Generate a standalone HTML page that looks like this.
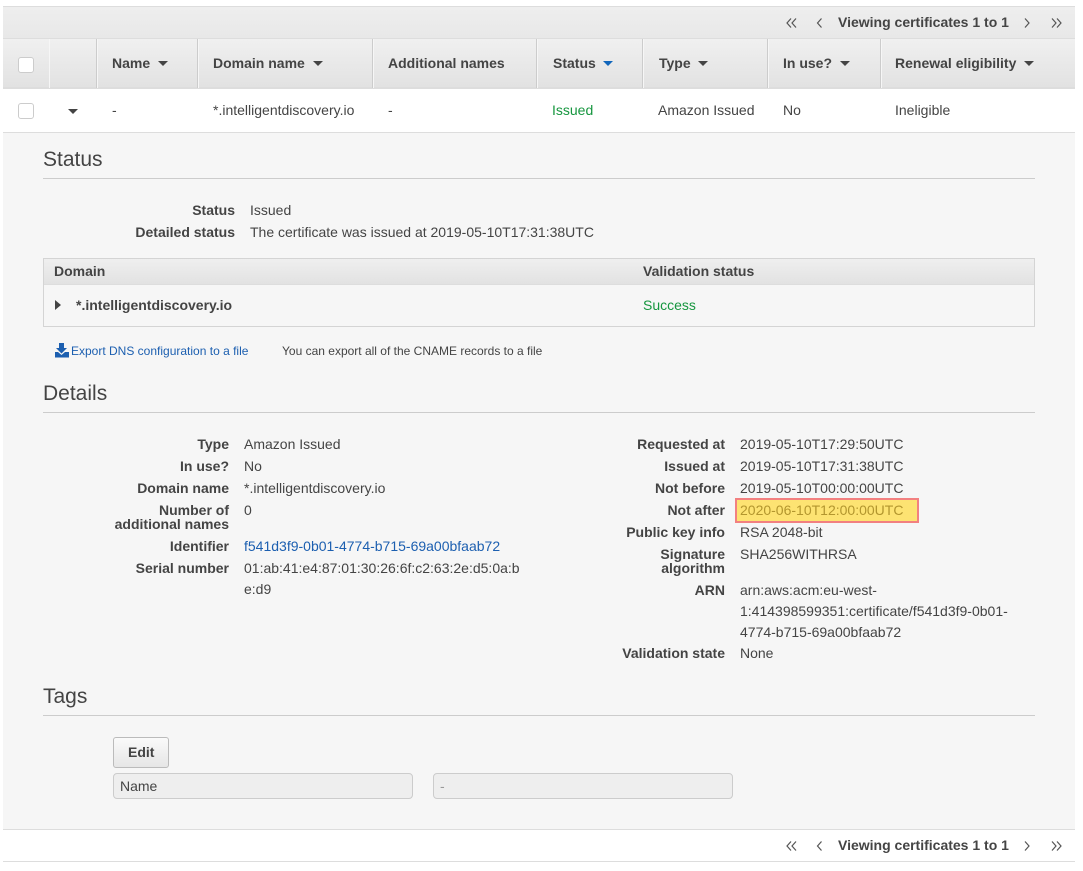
<!DOCTYPE html>
<html><head><meta charset="utf-8">
<style>
html,body{margin:0;padding:0;background:#fff;}
#p{position:relative;width:1083px;height:871px;overflow:hidden;background:#fff;font-family:"Liberation Sans",sans-serif;font-size:14px;color:#444;}
#p div,#p span.t,#p a{position:absolute;}
.t{line-height:20px;white-space:nowrap;}
.b{font-weight:bold;}
.r{text-align:right;}
.h{font-size:21px;line-height:24px;color:#444;white-space:nowrap;}
.hr{height:1px;background:#ccc;left:43px;width:992px;}
.bar{left:3px;width:1072px;background:linear-gradient(#eee,#e8e8e8);}
.sep{width:2px;top:39px;height:49px;background:#f6f6f6;border-left:1px solid #ccc;box-sizing:border-box;}
.cb{width:16px;height:16px;border:1px solid #ccc;border-radius:3px;background:#fff;left:18px;box-sizing:border-box;}
.tri{width:0;height:0;border-left:5px solid transparent;border-right:5px solid transparent;border-top:5px solid #444;}
.g{color:#16963f;}
.l{color:#1c5fb0;}
.inp{height:26px;background:#eee;border:1px solid #ccc;border-radius:4px;box-sizing:border-box;top:773px;}
svg{position:absolute;}
</style></head>
<body><div id="p">

<!-- top bar -->
<div class="bar" style="top:6px;height:32px;border-top:1px solid #ddd;box-sizing:border-box;"></div>
<svg style="left:780px;top:14px" width="290" height="18" fill="none" stroke="#555" stroke-width="1.2"><path d="M11 4.500L7 9l4 4.500M16 4.500L12 9l4 4.500"/><path d="M41.500 4.500L37.500 9l4 4.500"/><path d="M245 4.500L249 9l-4 4.500"/><path d="M272 4.500L276 9l-4 4.500M277 4.500L281 9l-4 4.500"/></svg>
<span class="t b" style="left:838px;top:12px;">Viewing certificates 1 to 1</span>

<!-- table header -->
<div class="bar" style="top:38px;height:51px;background:linear-gradient(#f0f0f0,#e2e2e2);border-top:1px solid #ddd;border-bottom:2px solid #ddd;box-sizing:border-box;"></div>
<div class="sep" style="left:49px;width:1px;border:0"></div>
<div class="sep" style="left:96px"></div>
<div class="sep" style="left:197px"></div>
<div class="sep" style="left:372px"></div>
<div class="sep" style="left:536px"></div>
<div class="sep" style="left:642px"></div>
<div class="sep" style="left:767px"></div>
<div class="sep" style="left:880px"></div>
<div class="cb" style="top:57px"></div>
<span class="t b" style="left:112px;top:53px;">Name</span><div class="tri" style="left:158px;top:61px"></div>
<span class="t b" style="left:213px;top:53px;">Domain name</span><div class="tri" style="left:313px;top:61px"></div>
<span class="t b" style="left:388px;top:53px;">Additional names</span>
<span class="t b" style="left:553px;top:53px;">Status</span><div class="tri" style="left:603px;top:61px;border-top-color:#1166bb"></div>
<span class="t b" style="left:659px;top:53px;">Type</span><div class="tri" style="left:698px;top:61px"></div>
<span class="t b" style="left:783px;top:53px;">In use?</span><div class="tri" style="left:840px;top:61px"></div>
<span class="t b" style="left:895px;top:53px;">Renewal eligibility</span><div class="tri" style="left:1024px;top:61px"></div>

<!-- row -->
<div class="cb" style="top:103px"></div>
<div class="tri" style="left:68px;top:109px"></div>
<span class="t" style="left:112px;top:100px;">-</span>
<span class="t" style="left:213px;top:100px;">*.intelligentdiscovery.io</span>
<span class="t" style="left:388px;top:100px;">-</span>
<span class="t g" style="left:552px;top:100px;">Issued</span>
<span class="t" style="left:658px;top:100px;">Amazon Issued</span>
<span class="t" style="left:783px;top:100px;">No</span>
<span class="t" style="left:895px;top:100px;">Ineligible</span>

<!-- detail panel -->
<div style="left:3px;top:132px;width:1072px;height:698px;background:#f6f6f6;border-top:1px solid #ddd;border-bottom:1px solid #ddd;box-sizing:border-box;"></div>

<span class="t h" style="left:43px;top:148px;line-height:24px;">Status</span>
<div class="hr" style="top:178px"></div>
<span class="t b r" style="left:100px;width:135px;top:200px;">Status</span>
<span class="t" style="left:250px;top:200px;">Issued</span>
<span class="t b r" style="left:100px;width:135px;top:222px;">Detailed status</span>
<span class="t" style="left:250px;top:222px;">The certificate was issued at 2019-05-10T17:31:38UTC</span>

<!-- domain table -->
<div style="left:43px;top:258px;width:992px;height:69px;border:1px solid #d4d4d4;box-sizing:border-box;"></div>
<div style="left:44px;top:259px;width:990px;height:26px;background:linear-gradient(#efefef,#e2e2e2);border-bottom:1px solid #ddd;box-sizing:border-box;"></div>
<span class="t b" style="left:54px;top:261px;">Domain</span>
<span class="t b" style="left:643px;top:261px;">Validation status</span>
<div style="left:55px;top:300px;width:0;height:0;border-top:5px solid transparent;border-bottom:5px solid transparent;border-left:6px solid #444;"></div>
<span class="t b" style="left:76px;top:295px;">*.intelligentdiscovery.io</span>
<span class="t g" style="left:643px;top:295px;">Success</span>

<svg style="left:54px;top:343px" width="16" height="15" fill="#1c5fb0"><path d="M5 0h5v5h3l-5.500 5.500L2 5h3z"/><path d="M1 9h3l3.500 3L11 9h4v5.500H1z"/></svg>
<span class="t l" style="left:71px;top:341px;font-size:12px;">Export DNS configuration to a file</span>
<span class="t" style="left:282px;top:341px;font-size:12px;">You can export all of the CNAME records to a file</span>

<span class="t h" style="left:43px;top:382px;line-height:24px;">Details</span>
<div class="hr" style="top:412px"></div>

<span class="t b r" style="left:90px;width:139px;top:434px;">Type</span>
<span class="t" style="left:244px;top:434px;">Amazon Issued</span>
<span class="t b r" style="left:90px;width:139px;top:456px;">In use?</span>
<span class="t" style="left:244px;top:456px;">No</span>
<span class="t b r" style="left:90px;width:139px;top:478px;">Domain name</span>
<span class="t" style="left:244px;top:478px;">*.intelligentdiscovery.io</span>
<span class="t b r" style="left:90px;width:139px;top:503px;line-height:14px;">Number of<br>additional names</span>
<span class="t" style="left:244px;top:500px;">0</span>
<span class="t b r" style="left:90px;width:139px;top:536px;">Identifier</span>
<span class="t l" style="left:244px;top:536px;">f541d3f9-0b01-4774-b715-69a00bfaab72</span>
<span class="t b r" style="left:90px;width:139px;top:558px;">Serial number</span>
<span class="t" style="left:244px;top:558px;line-height:21px;">01:ab:41:e4:87:01:30:26:6f:c2:63:2e:d5:0a:b<br>e:d9</span>

<span class="t b r" style="left:586px;width:139px;top:434px;">Requested at</span>
<span class="t" style="left:740px;top:434px;">2019-05-10T17:29:50UTC</span>
<span class="t b r" style="left:586px;width:139px;top:456px;">Issued at</span>
<span class="t" style="left:740px;top:456px;">2019-05-10T17:31:38UTC</span>
<span class="t b r" style="left:586px;width:139px;top:478px;">Not before</span>
<span class="t" style="left:740px;top:478px;">2019-05-10T00:00:00UTC</span>
<span class="t b r" style="left:586px;width:139px;top:500px;">Not after</span>
<div style="left:735px;top:498px;width:184px;height:25px;background:#fde372;border:2px solid #f28080;box-sizing:border-box;"></div>
<span class="t" style="left:740px;top:500px;color:#b3962e;">2020-06-10T12:00:00UTC</span>
<span class="t b r" style="left:586px;width:139px;top:522px;">Public key info</span>
<span class="t" style="left:740px;top:522px;">RSA 2048-bit</span>
<span class="t b r" style="left:586px;width:139px;top:547px;line-height:14px;">Signature<br>algorithm</span>
<span class="t" style="left:740px;top:544px;">SHA256WITHRSA</span>
<span class="t b r" style="left:586px;width:139px;top:580px;">ARN</span>
<span class="t" style="left:740px;top:580px;line-height:21px;">arn:aws:acm:eu-west-<br>1:414398599351:certificate/f541d3f9-0b01-<br>4774-b715-69a00bfaab72</span>
<span class="t b r" style="left:586px;width:139px;top:643px;">Validation state</span>
<span class="t" style="left:740px;top:643px;">None</span>

<span class="t h" style="left:43px;top:685px;line-height:24px;">Tags</span>
<div class="hr" style="top:715px"></div>

<div style="left:113px;top:737px;width:56px;height:31px;border:1px solid #bbb;border-radius:3px;background:linear-gradient(#fafafa,#e6e6e6);box-sizing:border-box;"></div>
<span class="t b" style="left:128px;top:742px;">Edit</span>
<div class="inp" style="left:113px;width:300px;"></div>
<span class="t" style="left:120px;top:776px;">Name</span>
<div class="inp" style="left:433px;width:300px;"></div>
<span class="t" style="left:440px;top:776px;color:#999;">-</span>

<!-- bottom bar -->
<div style="left:3px;top:861px;width:1072px;height:1px;background:#ddd;"></div>
<svg style="left:780px;top:837px" width="290" height="18" fill="none" stroke="#555" stroke-width="1.2"><path d="M11 4.500L7 9l4 4.500M16 4.500L12 9l4 4.500"/><path d="M41.500 4.500L37.500 9l4 4.500"/><path d="M245 4.500L249 9l-4 4.500"/><path d="M272 4.500L276 9l-4 4.500M277 4.500L281 9l-4 4.500"/></svg>
<span class="t b" style="left:838px;top:835px;">Viewing certificates 1 to 1</span>

</div></body></html>
